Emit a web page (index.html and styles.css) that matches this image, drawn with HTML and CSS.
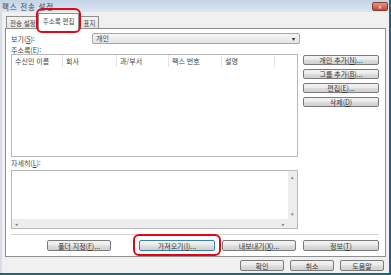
FILE: index.html
```html
<!DOCTYPE html>
<html lang="ko">
<head>
  <meta charset="UTF-8" />
  <title>팩스 전송 설정</title>
  <link rel="stylesheet" href="styles.css">
</head>
<body>

  <div class="window">
    <div class="titlebar">
      <span class="title">팩스 전송 설정</span>
      <span class="close">&#x2715;</span>
    </div>

    <div class="tabs">
      <div class="tab">전송 설정</div>
      <div class="tab active">주소록 편집<span class="mark"></span></div>
      <div class="tab">표지</div>
    </div>

    <section class="panel">
      <div class="view-row">
        <label class="view-label">보기(<u>S</u>):</label>
        <div class="select">
          <span>개인</span>
          <span class="arrow">&#9662;</span>
        </div>
      </div>

      <div class="caption">주소록(<u>E</u>):</div>

      <div class="book">
        <div class="listbox">
          <div class="list-head">
            <span class="col c1">수신인 이름</span>
            <span class="col c2">회사</span>
            <span class="col c3">과/부서</span>
            <span class="col c4">팩스 번호</span>
            <span class="col c5">설명</span>
          </div>
        </div>
        <div class="side-buttons">
          <button>개인 추가(<u>N</u>)...</button>
          <button>그룹 추가(<u>B</u>)...</button>
          <button>편집(<u>E</u>)...</button>
          <button>삭제(<u>D</u>)</button>
        </div>
      </div>

      <div class="caption detail-caption">자세히(<u>L</u>):</div>

      <div class="details">
        <div class="details-text"></div>
        <div class="vscroll"><span>&#9652;</span><span>&#9662;</span></div>
        <div class="hscroll"><span>&#9666;</span><span>&#9656;</span></div>
        <div class="corner"></div>
      </div>

      <hr class="sep">

      <div class="action-row">
        <button class="b-folder">폴더 지정(<u>F</u>)...</button>
        <button class="b-import">가져오기(<u>I</u>)...<span class="mark"></span></button>
        <button class="b-export">내보내기(<u>X</u>)...</button>
        <button class="b-info">정보(<u>T</u>)</button>
      </div>
    </section>

    <div class="dialog-buttons">
      <button>확인</button>
      <button>취소</button>
      <button>도움말</button>
    </div>
  </div>

</body>
</html>
```

FILE: styles.css
```css
body {
  margin: 0;
  background-color: #1f6678;
  font-family: "Noto Sans CJK KR", "Noto Sans", sans-serif;
  font-size: 7px;
  color: #444;
}
u {
  text-decoration: underline;
}
.window {
  width: 389px;
  height: 273px;
  background-color: #f0f0f0;
  border-left: 2px solid #d6dde6;
  box-sizing: border-box;
  display: flex;
  flex-direction: column;
}
.titlebar {
  height: 12px;
  background: linear-gradient(#c3d4e7, #dbe6f2);
  display: flex;
  align-items: center;
  justify-content: space-between;
  padding: 0 1px 0 2px;
  margin-left: -2px;
}
.title {
  font-size: 7.5px;
  letter-spacing: 0.8px;
  color: #444;
}
.close {
  width: 14px;
  height: 7px;
  border: 1px solid #8b3b2c;
  border-radius: 2px;
  background: linear-gradient(#e29a88, #c4452f);
  color: #fff;
  font-size: 5px;
  line-height: 7px;
  text-align: center;
}
.tabs {
  display: flex;
  align-items: flex-end;
  height: 16px;
  padding-left: 4px;
  font-size: 6.5px;
}
.tab {
  height: 12px;
  padding: 0 3px;
  border: 1px solid #8e8f8f;
  border-bottom: 0;
  background: linear-gradient(#f4f4f4, #e2e2e2);
  line-height: 12px;
  box-sizing: border-box;
  margin-right: -1px;
}
.tab.active {
  position: relative;
  height: 16px;
  line-height: 14px;
  background: #fff;
  padding: 0 4px;
  margin: 0 0 -1px -1px;
  z-index: 1;
}
.mark {
  position: absolute;
  border: 2px solid #e30613;
  border-radius: 6px;
}
.tab .mark {
  left: -3px;
  right: -3px;
  top: -6px;
  bottom: -4px;
}
.panel {
  height: 229px;
  margin: 0 3px;
  border: 1px solid #8e8f8f;
  background: #fff;
  padding: 4px 6px 0 5px;
  box-sizing: border-box;
}
.view-row {
  display: flex;
  align-items: center;
  height: 11px;
}
.view-label {
  width: 81px;
}
.select {
  width: 208px;
  height: 11px;
  box-sizing: border-box;
  border: 1px solid #a7a7a7;
  border-radius: 2px;
  background: linear-gradient(#f6f6f6, #e4e4e4);
  display: flex;
  align-items: center;
  justify-content: space-between;
  padding: 0 4px 0 3px;
  line-height: 9px;
}
.arrow {
  font-size: 6px;
  color: #222;
}
.caption {
  height: 10px;
  line-height: 12px;
}
.book {
  display: flex;
  gap: 5px;
}
.listbox {
  width: 287px;
  height: 103px;
  box-sizing: border-box;
  border: 1px solid #b9b9b9;
}
.list-head {
  display: flex;
  height: 12px;
  line-height: 12px;
}
.col {
  padding-left: 3px;
  box-sizing: border-box;
  border-right: 1px solid #e3e3e3;
}
.c1 { width: 51px; }
.c2 { width: 54px; }
.c3 { width: 52px; }
.c4 { width: 53px; }
.c5 { width: 53px; }
.side-buttons {
  display: flex;
  flex-direction: column;
  gap: 4px;
  padding-top: 1px;
}
button {
  font-family: inherit;
  font-size: 7px;
  color: #333;
  height: 10px;
  padding: 0;
  line-height: 8px;
  border: 1px solid #7a7a7a;
  border-radius: 2px;
  background: linear-gradient(#f3f3f3 0%, #ebebeb 45%, #dcdcdc 55%, #d0d0d0 100%);
}
.side-buttons button {
  width: 76px;
}
.detail-caption {
  height: 13px;
  line-height: 13px;
}
.details {
  width: 287px;
  height: 59px;
  box-sizing: border-box;
  border: 1px solid #b9b9b9;
  display: grid;
  grid-template-columns: 1fr 9px;
  grid-template-rows: 1fr 9px;
}
.vscroll, .hscroll, .corner {
  background: #ededed;
  font-size: 5px;
  color: #777;
  display: flex;
  justify-content: space-between;
  align-items: center;
}
.vscroll {
  flex-direction: column;
  padding: 2px 0;
}
.hscroll {
  padding: 0 3px;
}
.sep {
  width: 368px;
  margin: 5px 0 0;
  border: 0;
  border-top: 1px solid #d5d5d5;
}
.action-row {
  display: flex;
  justify-content: flex-end;
  gap: 7px;
  margin-top: 5px;
}
.action-row button {
  height: 11px;
}
.b-folder { width: 64px; margin-right: 21px; }
.b-import { width: 76px; position: relative; border-color: #3c7fb1; }
.b-export { width: 74px; }
.b-info { width: 76px; }
.b-import .mark {
  left: -7px;
  right: -7px;
  top: -7px;
  bottom: -6px;
}
.dialog-buttons {
  display: flex;
  justify-content: flex-end;
  gap: 6px;
  padding: 3px 5px 0 0;
}
.dialog-buttons button {
  width: 44px;
  height: 11px;
}
```
